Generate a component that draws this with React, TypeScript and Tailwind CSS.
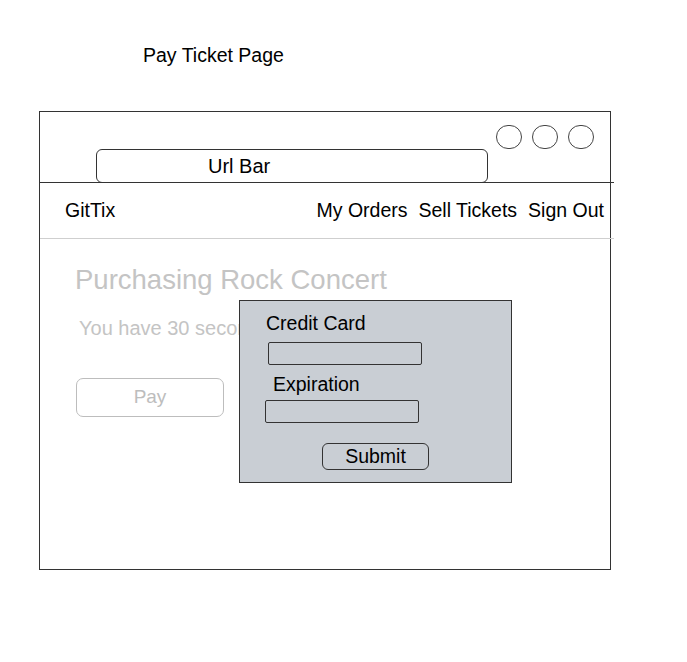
export default function App() {
  return (
    <div className="min-h-[662px] bg-white pt-[43px] font-['Liberation_Sans',Arial,sans-serif] text-black">
      {/* Page caption */}
      <div className="ml-[143px] text-[19.5px] leading-[24px]">Pay Ticket Page</div>

      {/* Browser frame */}
      <div className="mt-[44px] ml-[39px] w-[572px] h-[459px] border border-[#333] flex flex-col">
        {/* Browser chrome */}
        <div className="h-[71px] -mr-[4px] border-b border-[#333] flex">
          <div className="self-end -mb-[1px] ml-[56px] w-[392px] h-[34px] border border-[#333] rounded-[6px] flex items-center pl-[111px] text-[20px]">
            Url Bar
          </div>
          <div className="ml-auto mr-[20px] mt-[13px] flex gap-[10px]">
            <div className="w-[26px] h-[24px] rounded-full border border-[#444]" />
            <div className="w-[26px] h-[24px] rounded-full border border-[#444]" />
            <div className="w-[26px] h-[24px] rounded-full border border-[#444]" />
          </div>
        </div>

        {/* App nav */}
        <div className="h-[56px] -mr-[4px] border-b border-[#cfcfcf] flex items-center pl-[25px] pr-[10px] text-[19.5px]">
          <span>GitTix</span>
          <div className="ml-auto flex gap-[11px]">
            <span>My Orders</span>
            <span>Sell Tickets</span>
            <span>Sign Out</span>
          </div>
        </div>

        {/* Page body */}
        <div className="relative flex-1 pt-[25px] pl-[35px]">
          <div className="text-[27.5px] leading-[32px] text-[#c4c4c4]">Purchasing Rock Concert</div>
          <div className="mt-[20px] ml-[4px] w-[160px] overflow-hidden whitespace-nowrap text-[20px] leading-[24px] text-[#c4c4c4]">
            You have 30 seconds to pay
          </div>
          <button className="mt-[38px] ml-[1px] w-[148px] h-[39px] border border-[#bdbdbd] rounded-[7px] text-[19px] text-[#bdbdbd] flex items-center justify-center">
            Pay
          </button>

          {/* Payment modal */}
          <div className="absolute left-[199px] top-[61px] w-[273px] h-[183px] bg-[#c9ced4] border border-[#333] flex flex-col items-start pt-[10px] text-[19.5px]">
            <div className="ml-[26px] leading-[24px]">Credit Card</div>
            <div className="mt-[7px] ml-[28px] w-[154px] h-[23px] border border-[#333] rounded-[2px]" />
            <div className="mt-[7px] ml-[33px] leading-[24px]">Expiration</div>
            <div className="mt-[4px] ml-[25px] w-[154px] h-[23px] border border-[#333] rounded-[2px]" />
            <button className="mt-[20px] ml-[82px] w-[107px] h-[27px] border border-[#333] rounded-[6px] flex items-center justify-center text-[19.5px]">
              Submit
            </button>
          </div>
        </div>
      </div>
    </div>
  );
}
